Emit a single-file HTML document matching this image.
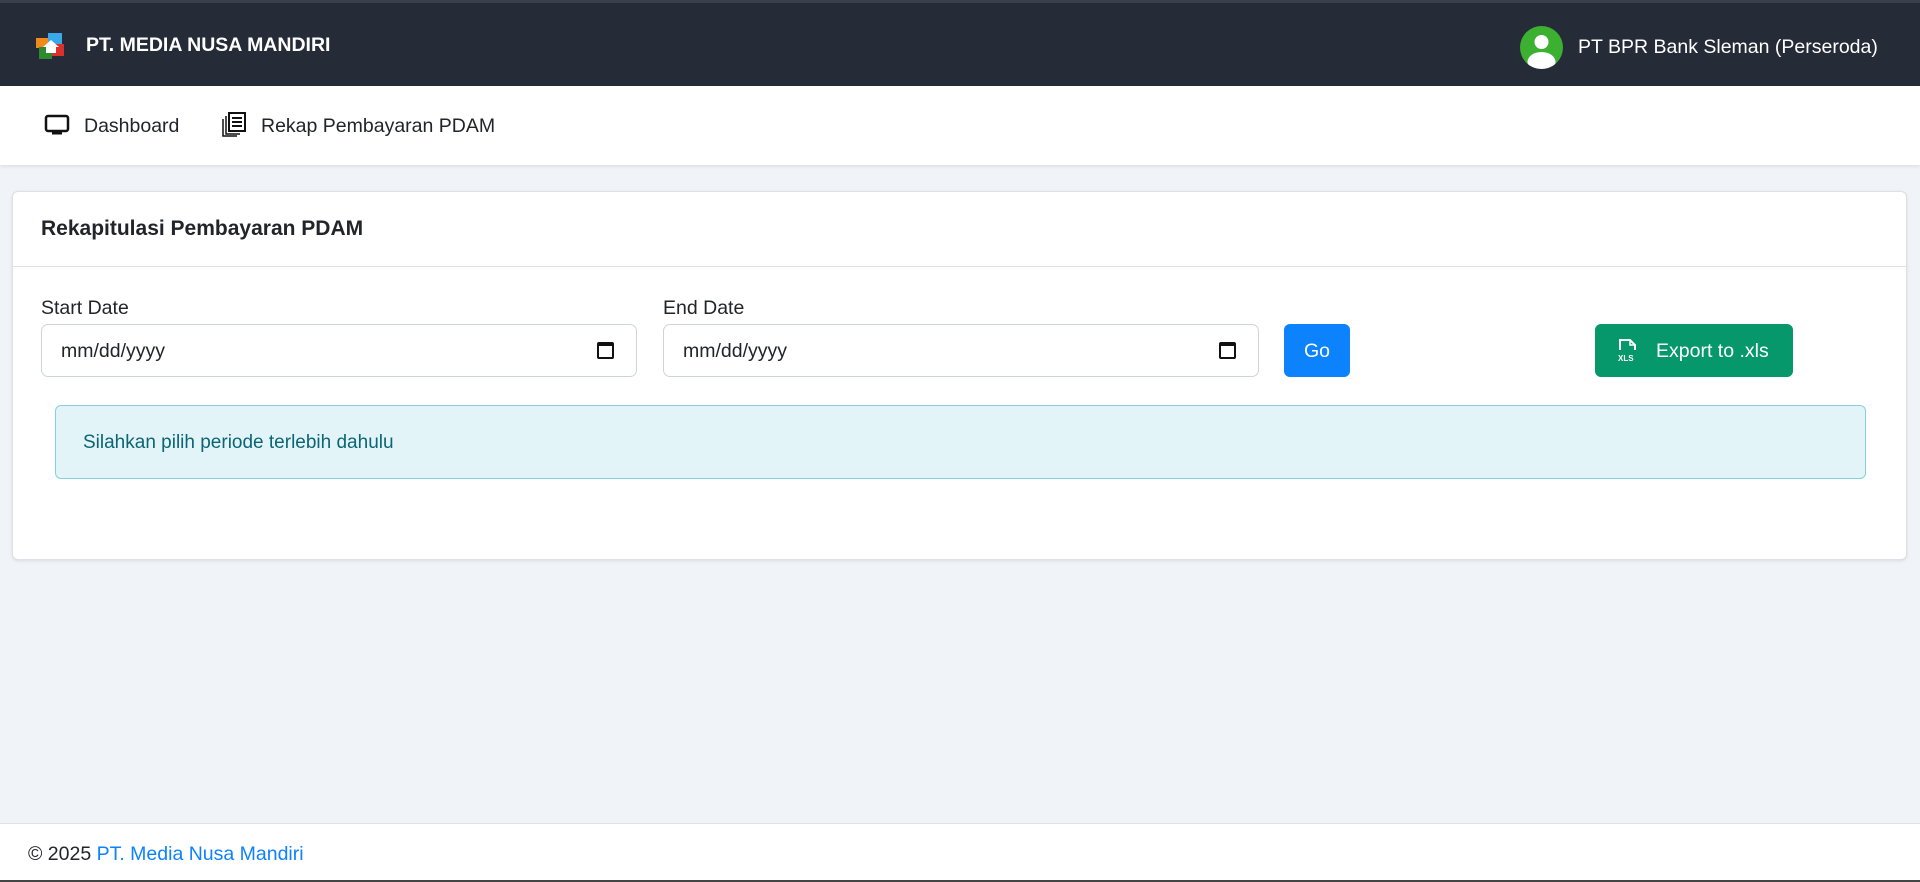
<!DOCTYPE html>
<html><head><meta charset="utf-8"><style>
*{box-sizing:border-box;margin:0;padding:0}
body{width:1920px;height:882px;overflow:hidden;background:#f0f3f8;font-family:"Liberation Sans",sans-serif;font-size:19.5px;color:#212529;position:relative}
.top{position:absolute;left:0;top:0;width:1920px;height:86px;background:#252b37;border-top:3px solid #3a3f4a}
.brand{position:absolute;left:86px;top:31px;color:#fff;font-weight:bold;font-size:19.5px}
.user{position:absolute;left:1578px;top:33px;color:#fff;font-size:19.5px}
.av{position:absolute;left:1520px;top:23px;width:43px;height:43px;border-radius:50%;background:#3cb131;overflow:hidden}
.nav{position:absolute;left:0;top:86px;width:1920px;height:79px;background:#fff;box-shadow:0 2px 3px rgba(0,0,0,.08)}
.nav span{position:absolute;top:29px;font-size:19.5px}
.card{position:absolute;left:12px;top:191px;width:1895px;height:369px;background:#fff;border:1px solid #dde0e4;border-radius:6px;box-shadow:0 1px 3px rgba(0,0,0,.1)}
.ch{height:75px;border-bottom:1px solid #dee2e6;padding:25px 28px;font-weight:bold;font-size:21px}
.lbl{position:absolute;top:105px;font-size:19.5px}
.inp{position:absolute;top:132px;width:596px;height:53px;border:1px solid #ced4da;border-radius:7px;padding:15px 19px;font-size:19.5px}
.cal{position:absolute;right:22px;top:17px;width:17px;height:17px;border:2px solid #111;border-top-width:4px;border-radius:2px}
.go{position:absolute;left:1271px;top:132px;width:66px;height:53px;background:#0d82fd;border-radius:6px;color:#fff;text-align:center;line-height:55px}
.ex{position:absolute;left:1582px;top:132px;width:198px;height:53px;background:#06976a;border-radius:6px;color:#fff;line-height:55px;padding-left:61px}
.al{position:absolute;left:42px;top:213px;width:1811px;height:74px;background:#e3f4f9;border:1px solid #86d0dc;border-radius:6px;color:#0b6573;padding:26px 27px;font-size:19px}
.foot{position:absolute;left:0;top:823px;width:1920px;height:57px;background:#fff;border-top:1px solid #dee2e6;padding:19px 28px;font-size:19.5px}
.foot a{color:#0d82fd;text-decoration:none}
.bot{position:absolute;left:0;top:880px;width:1920px;height:2px;background:#444}
</style></head><body>
<div class="top">
<svg style="position:absolute;left:34px;top:27px" width="34" height="32" viewBox="0 0 34 32"><rect x="2" y="8" width="12" height="10" fill="#f08a1c"/><rect x="14" y="3" width="14" height="12" fill="#3aa9e8"/><rect x="16" y="14" width="14" height="12" fill="#d9322c"/><rect x="5" y="17" width="13" height="12" fill="#2e8a2e"/><path d="M9 17l8-7 8 7h-3v6h-10v-6z" fill="#fff"/></svg>
<div class="brand">PT. MEDIA NUSA MANDIRI</div>
<div class="av"><svg width="43" height="43" viewBox="0 0 43 43"><circle cx="21.5" cy="16" r="7" fill="#fff"/><ellipse cx="21.5" cy="36" rx="14" ry="10" fill="#fff"/></svg></div>
<div class="user">PT BPR Bank Sleman (Perseroda)</div>
</div>
<div class="nav">
<svg style="position:absolute;left:44px;top:28px" width="26" height="22" viewBox="0 0 26 22"><rect x="2" y="2" width="22" height="15" rx="2" fill="none" stroke="#111" stroke-width="2.5"/><rect x="8" y="18" width="10" height="2.5" fill="#111"/></svg>
<span style="left:84px">Dashboard</span>
<svg style="position:absolute;left:220px;top:25px" width="28" height="26" viewBox="0 0 28 26"><rect x="9" y="2" width="16" height="18" fill="#fff" stroke="#111" stroke-width="2"/><path d="M12 7h10M12 11h10M12 15h10" stroke="#111" stroke-width="2"/><path d="M6 5v18h14M3 8v17h14" fill="none" stroke="#111" stroke-width="1.5"/></svg>
<span style="left:261px">Rekap Pembayaran PDAM</span>
</div>
<div class="card">
<div class="ch">Rekapitulasi Pembayaran PDAM</div>
<div class="lbl" style="left:28px">Start Date</div>
<div class="inp" style="left:28px">mm/dd/yyyy<div class="cal"></div></div>
<div class="lbl" style="left:650px">End Date</div>
<div class="inp" style="left:650px">mm/dd/yyyy<div class="cal"></div></div>
<div class="go">Go</div>
<div class="ex"><svg style="position:absolute;left:22px;top:14px" width="22" height="24" viewBox="0 0 22 24"><path d="M3 12V2h10l5 5v5" fill="none" stroke="#fff" stroke-width="2"/><path d="M13 2v5h5" fill="none" stroke="#fff" stroke-width="1.5"/><text x="1" y="23" font-size="8" font-weight="bold" fill="#fff" font-family="Liberation Sans">XLS</text></svg>Export to .xls</div>
<div class="al">Silahkan pilih periode terlebih dahulu</div>
</div>
<div class="foot">© 2025 <a>PT. Media Nusa Mandiri</a></div>
<div class="bot"></div>
</body></html>
